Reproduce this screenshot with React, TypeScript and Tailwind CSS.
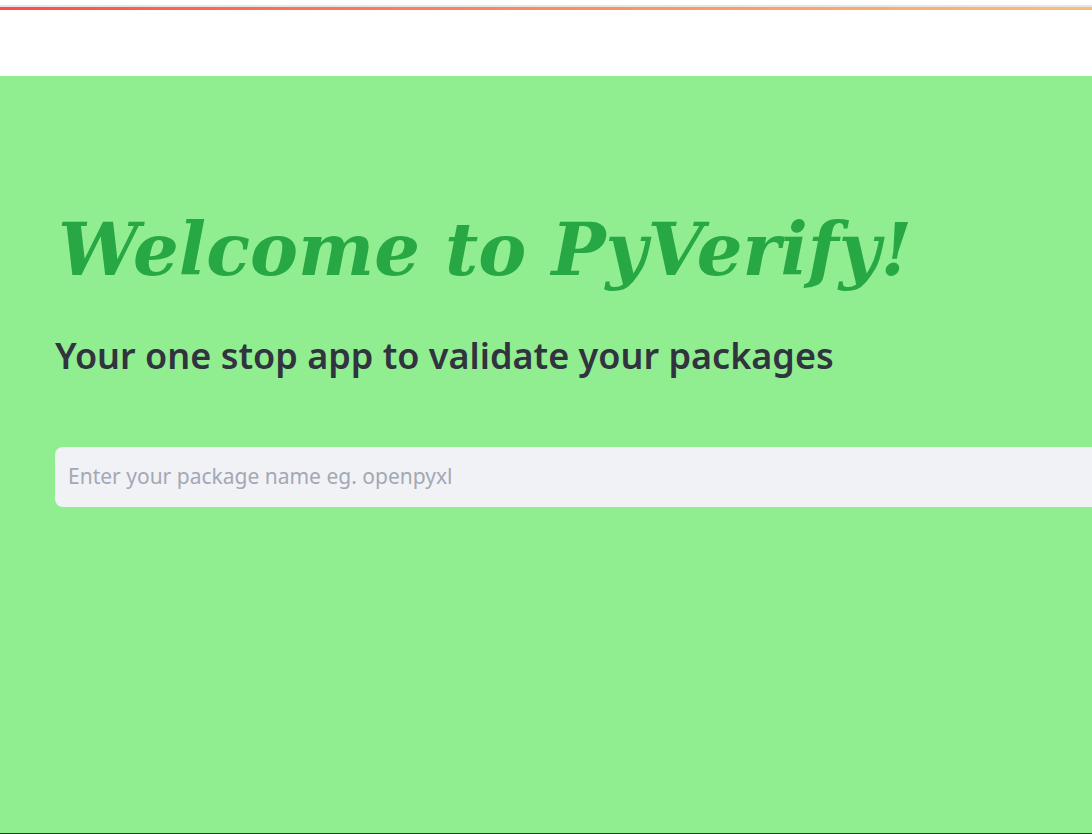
import React from "react";

export default function App() {
  return (
    <div className="h-[834px] w-full overflow-hidden flex flex-col bg-white">
      <header className="h-[76px] shrink-0 bg-white">
        <div className="h-[5px] bg-white" />
        <div className="h-[2px] bg-[#e6e6e6]" />
        <div className="h-[3px] bg-gradient-to-r from-[#ff4b4b] to-[#ffbd72]" />
      </header>
      <main className="flex-1 bg-[#90EE90] border-b border-[#31333f] pl-[55px] pt-[132px] overflow-hidden">
        <h1
          className="text-[#28a745] italic font-bold text-[72px] leading-[84px] ml-[3px] whitespace-nowrap"
          style={{ fontFamily: '"DejaVu Serif", Georgia, serif' }}
        >
          Welcome to PyVerify!
        </h1>
        <h2
          className="text-[#31333f] font-semibold text-[36px] leading-[50px] mt-[39px] whitespace-nowrap"
          style={{ fontFamily: '"Noto Sans", sans-serif' }}
        >
          Your one stop app to validate your packages
        </h2>
        <div className="mt-[66px] w-[1100px] h-[60px] bg-[#f0f2f6] rounded-l-[8px] flex items-center pl-[13px]">
          <input
            className="w-full bg-transparent outline-none text-[21px] text-[#31333f] placeholder:text-[#a3a8b4]"
            style={{ fontFamily: '"Noto Sans", sans-serif' }}
            placeholder="Enter your package name eg. openpyxl"
          />
        </div>
      </main>
    </div>
  );
}
